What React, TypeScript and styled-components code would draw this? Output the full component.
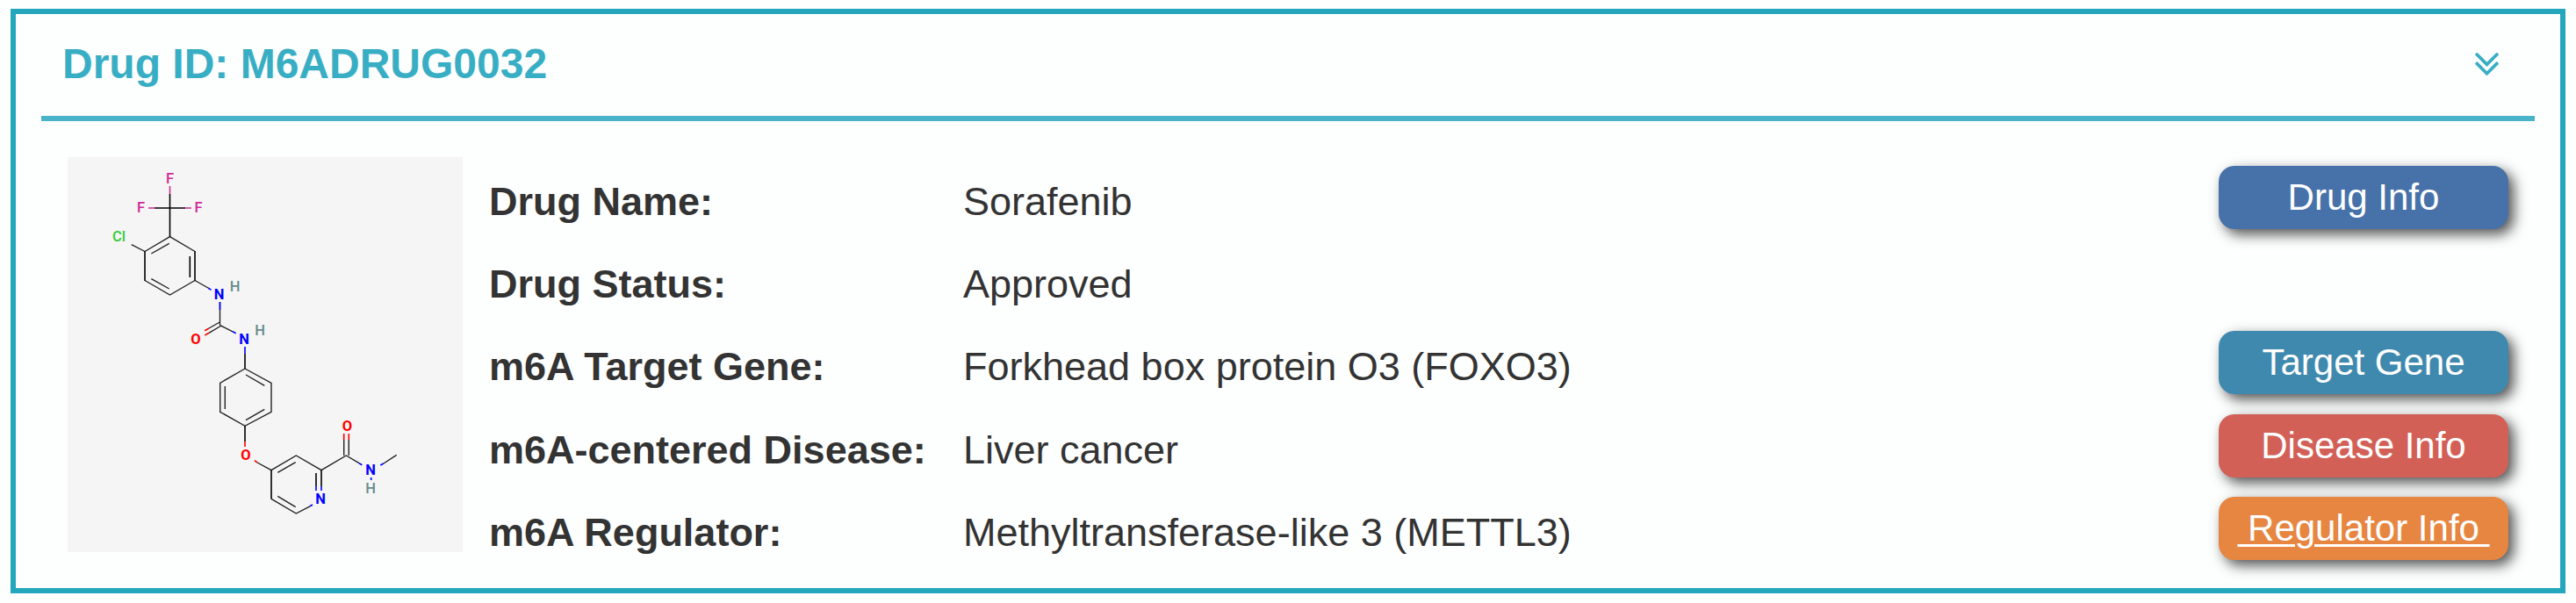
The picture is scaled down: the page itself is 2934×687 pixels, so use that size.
import { createGlobalStyle, styled } from "styled-components";

const GlobalStyle = createGlobalStyle`
  * {
    box-sizing: border-box;
  }
  body {
    margin: 0;
    background-color: #fdfefe;
    color: #333333;
    font-family: Arial, "Liberation Sans", sans-serif;
  }
`;

const Card = styled.section`
  width: 2910px;
  height: 666px;
  margin: 10px 12px;
  padding: 0 29px;
  border: 6px solid #24a6bc;
`;
const Header = styled.header`
  display: flex;
  justify-content: space-between;
  align-items: center;
  height: 122px;
  padding: 0 41px 0 24px;
  border-bottom: 6px solid #49b3c8;
  color: #38aec4;
`;
const Title = styled.h2`
  margin: 0;
  padding-bottom: 2px;
  font-size: 48px;
  line-height: 60px;
`;
const ToggleButton = styled.button`
  display: flex;
  margin-bottom: 3px;
  padding: 0;
  border: 0;
  background: none;
  color: inherit;
  cursor: pointer;
`;
const Body = styled.div`
  display: flex;
  padding: 41px 30px 0;
`;
const Structure = styled.div`
  width: 450px;
  height: 450px;
  background-color: #f5f5f5;
  svg {
    display: block;
  }
`;
const Rows = styled.div`
  flex: 1;
  margin-left: 30px;
  padding-top: 4px;
`;
const Row = styled.div`
  display: grid;
  grid-template-columns: 540px 1fr 330px;
  align-items: center;
  height: 94.2px;
  font-size: 45px;
  line-height: 60px;
`;
const Label = styled.span`
  font-weight: 700;
`;
const Value = styled.span``;
const InfoButton = styled.a<{ $color: string; $underline?: boolean }>`
  display: flex;
  justify-content: center;
  height: 72px;
  margin-bottom: 10px;
  border-radius: 18px;
  background-color: ${(props) => props.$color};
  box-shadow: 6px 6px 15px #505050;
  color: white;
  font-size: 42px;
  line-height: 72px;
  white-space: pre;
  text-decoration: ${(props) => (props.$underline ? "underline" : "none")};
  text-decoration-thickness: 3px;
  text-underline-offset: 4px;
`;
const Atom = styled.text<{ $bold?: boolean }>`
  font-family: Roboto, sans-serif;
  font-size: 16.5px;
  font-weight: ${(props) => (props.$bold ? 700 : 500)};
  text-anchor: middle;
`;

interface IRow {
  label: string;
  value: string;
  button?: string;
  color?: string;
  underline?: boolean;
}

const rows: IRow[] = [
  {
    label: "Drug Name:",
    value: "Sorafenib",
    button: "Drug Info",
    color: "#4672a9",
  },
  { label: "Drug Status:", value: "Approved" },
  {
    label: "m6A Target Gene:",
    value: "Forkhead box protein O3 (FOXO3)",
    button: "Target Gene",
    color: "#3f89ae",
  },
  {
    label: "m6A-centered Disease:",
    value: "Liver cancer",
    button: "Disease Info",
    color: "#d36057",
  },
  {
    label: "m6A Regulator:",
    value: "Methyltransferase-like 3 (METTL3)",
    button: " Regulator Info ",
    color: "#e68641",
    underline: true,
  },
];

const colors = {
  F: "#cf2a96",
  Cl: "#32cd32",
  N: "#0000ff",
  O: "#ff0000",
  H: "#668b8b",
};

const atoms: { name: keyof typeof colors; x: number; y: number }[] = [
  { name: "F", x: 193.5, y: 203 },
  { name: "F", x: 160.5, y: 236 },
  { name: "F", x: 226, y: 236 },
  { name: "Cl", x: 135.5, y: 269 },
  { name: "N", x: 249.5, y: 335.5 },
  { name: "H", x: 267.5, y: 326 },
  { name: "O", x: 223, y: 386.5 },
  { name: "N", x: 278, y: 386.5 },
  { name: "H", x: 296, y: 376.5 },
  { name: "O", x: 280, y: 518.5 },
  { name: "N", x: 365, y: 568 },
  { name: "O", x: 395.5, y: 485.5 },
  { name: "N", x: 422, y: 535.5 },
  { name: "H", x: 422, y: 556 },
];

function Molecule() {
  return (
    <svg width="450" height="450" viewBox="77 179 450 450" fill="none">
      <g stroke="#222222" strokeWidth="1.4">
        {/* chlorophenyl ring */}
        <path d="M193.5 269.7L222 286.5M222 319.5L193.5 336L165 319.5M165 286.5L193.5 269.7" />
        <path d="M172.3 289L192.7 277.3M172.3 317.7L192.7 329M149.7 278.7L165 286.5" />
        {/* urea bridge */}
        <path d="M222 319.5L237 328M250.5 344V370M250.3 367L238 374M252 371L238 379.3M250.3 370.5L265 377.8" />
        {/* middle ring */}
        <path d="M279 420L309 436.3V469.3L279 485.3L250.7 469.3V436.3L279 420" />
        <path d="M280 427L301.3 439.3M301.3 466.3L280 478.7M256.3 440V466" />
        {/* pyridine and amide */}
        <path d="M293 527L309 535.7L337.3 519L366 535.7L394.3 519L409 527.7M309 568.3L337.3 585L353 576.8" />
        <path d="M316.3 538.3L336.7 526.7M316.3 565.3L336.7 577.7M391.7 501V519M397.3 501V519M437 528L451.7 518.3" />
      </g>
      <path
        stroke="#000000"
        strokeWidth="1.6"
        d="M193.5 221V270M176 237H211M165 286V320M222 286V320M216.3 292V316M279 403V420M279 485V503M309 535.5V568.5M366 535.5V554M360 539V554"
      />
      <path
        stroke={colors.F}
        strokeWidth="1.6"
        d="M193.5 212V221M169 237H176M211 237H218"
      />
      <path
        stroke={colors.N}
        strokeWidth="1.6"
        d="M237 328L240.5 330.3M250.5 344V353M265 377.8L268.7 379.7M279 395V403M360 554V559M366 554V559M353 576.8L356 575M409 527.7L412.3 529.7M433.3 530L437 528M422.7 544V547"
      />
      <path
        stroke={colors.O}
        strokeWidth="1.6"
        d="M238 374L233.3 376.7M238 379.3L233.3 382M279 503V509M290 524.7L293 527M391.7 494V501M397.3 494V501"
      />
      {atoms.map((atom) => (
        <Atom
          key={`${atom.x}-${atom.y}`}
          x={atom.x}
          y={atom.y + 5.7}
          fill={colors[atom.name]}
          $bold={atom.name === "N" || atom.name === "O"}
        >
          {atom.name}
        </Atom>
      ))}
    </svg>
  );
}

export default function App() {
  return (
    <>
      <GlobalStyle />
      <Card>
        <Header>
          <Title>Drug ID: M6ADRUG0032</Title>
          <ToggleButton>
            <svg
              width="27"
              height="26"
              viewBox="109 397 998 966"
              fill="currentColor"
              aria-hidden="true"
            >
              <path d="M1107 864q0 13-10 23l-466 466q-10 10-23 10t-23-10l-466-466q-10-10-10-23t10-23l50-50q10-10 23-10t23 10l393 393 393-393q10-10 23-10t23 10l50 50q10 10 10 23zm0-384q0 13-10 23l-466 466q-10 10-23 10t-23-10L119 503q-10-10-10-23t10-23l50-50q10-10 23-10t23 10l393 393 393-393q10-10 23-10t23 10l50 50q10 10 10 23z" />
            </svg>
          </ToggleButton>
        </Header>
        <Body>
          <Structure>
            <Molecule />
          </Structure>
          <Rows>
            {rows.map((row) => (
              <Row key={row.label}>
                <Label>{row.label}</Label>
                <Value>{row.value}</Value>
                {row.button && row.color && (
                  <InfoButton $color={row.color} $underline={row.underline}>
                    {row.button}
                  </InfoButton>
                )}
              </Row>
            ))}
          </Rows>
        </Body>
      </Card>
    </>
  );
}
